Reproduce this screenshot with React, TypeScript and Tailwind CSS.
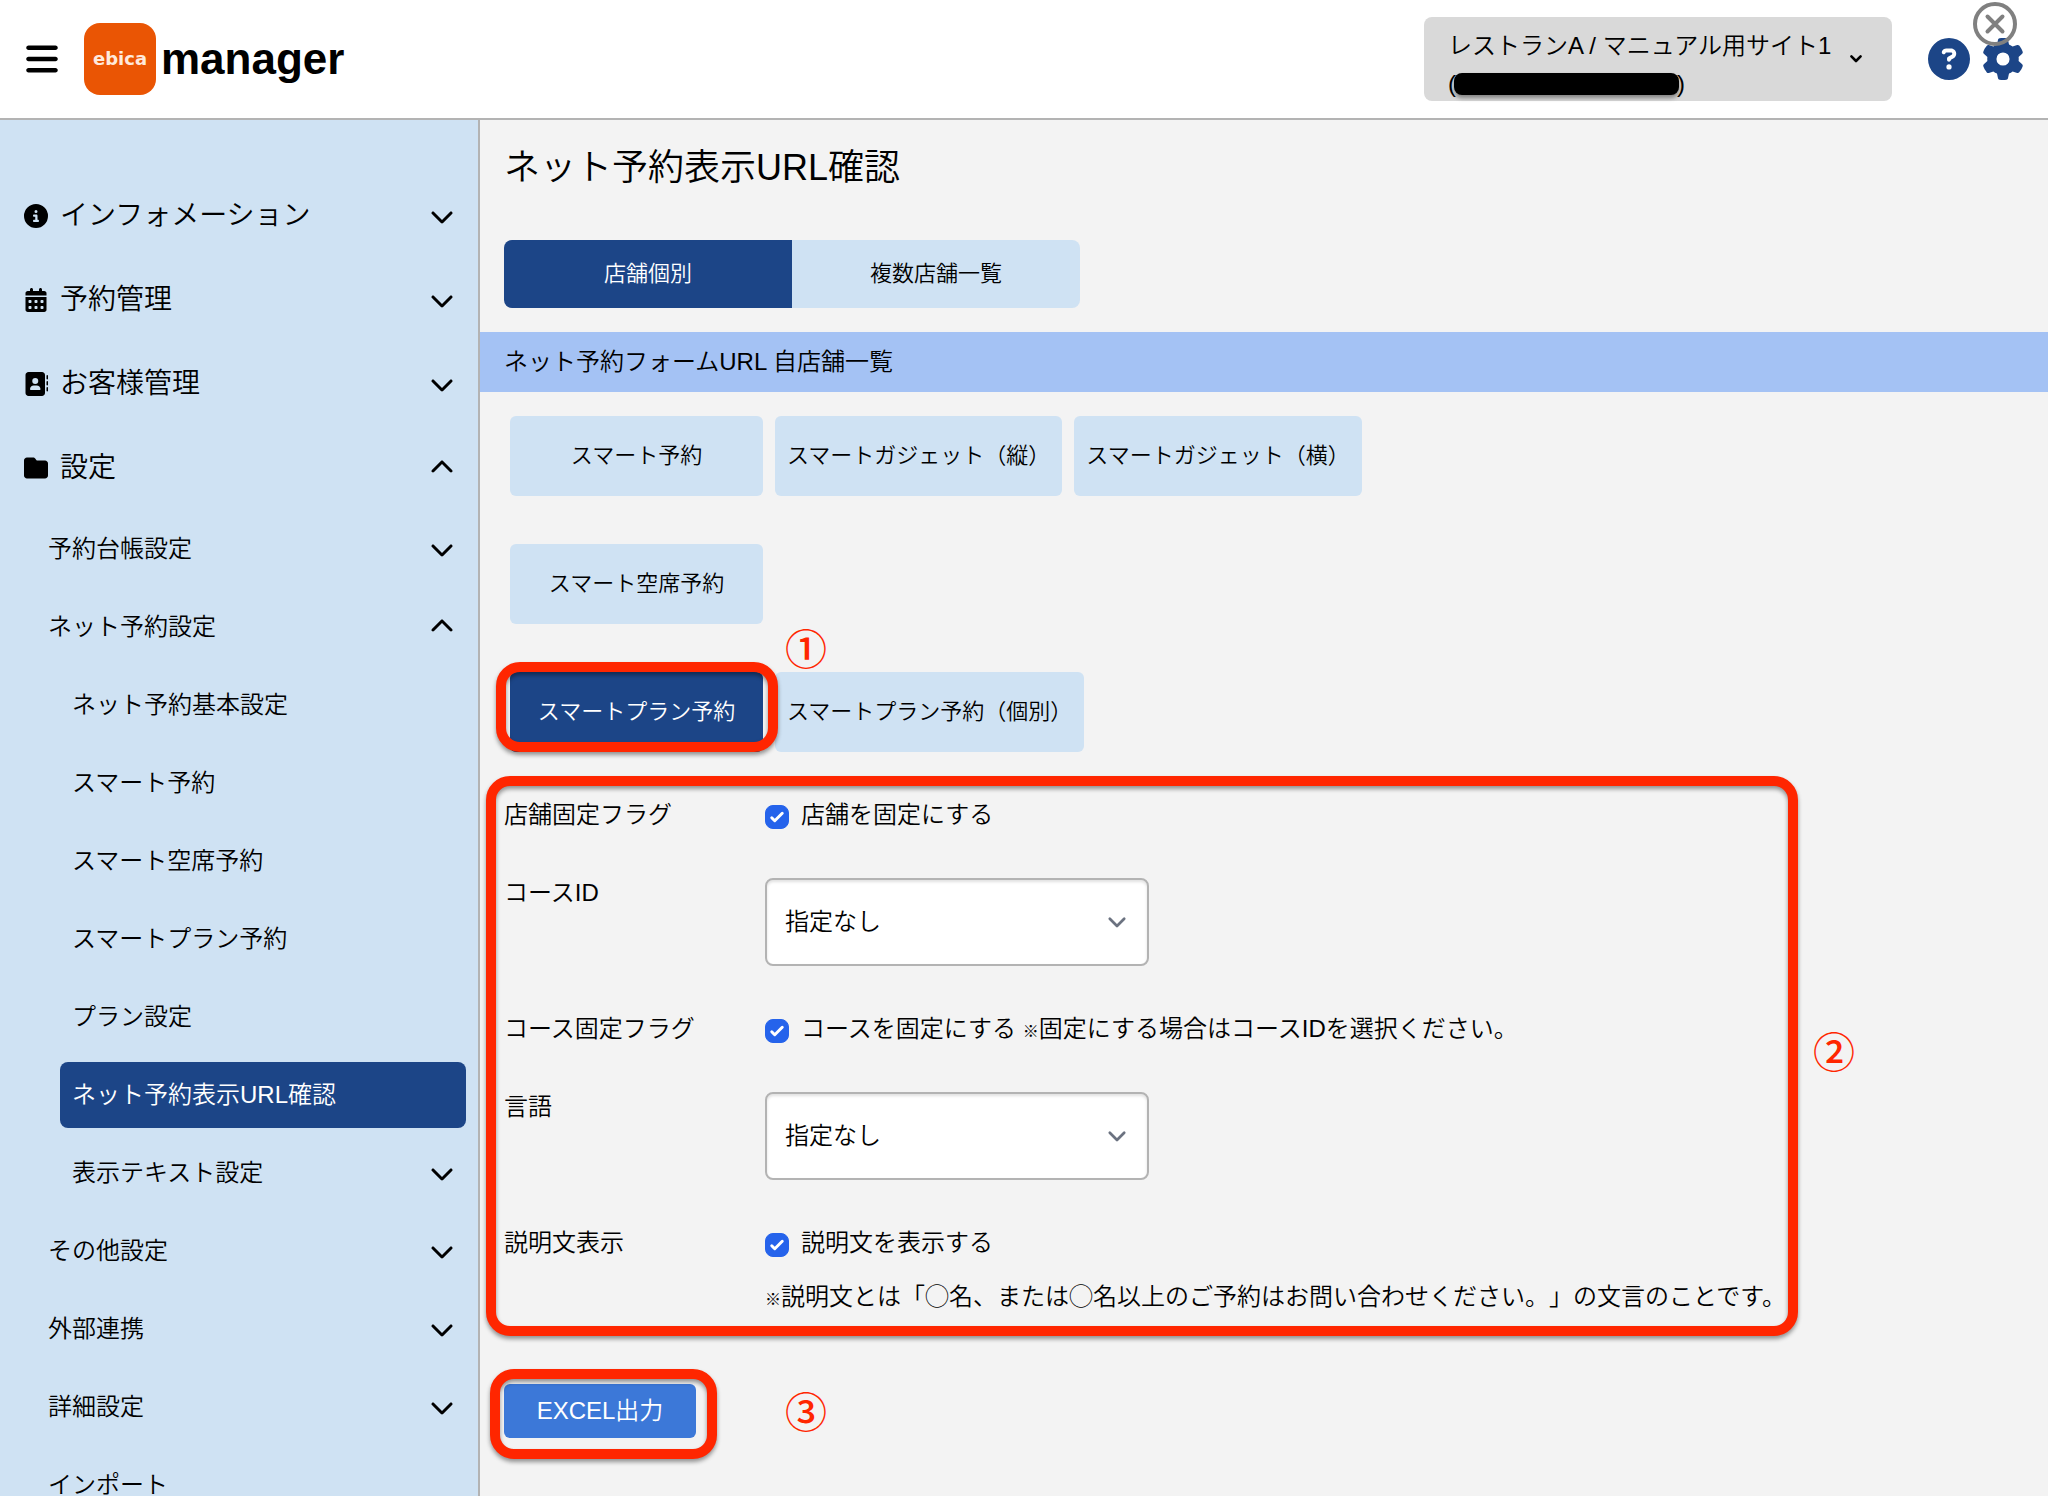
import { useState, type ReactNode } from "react";
import {
  FaAddressBook,
  FaBars,
  FaCalendarDays,
  FaChevronDown,
  FaChevronUp,
  FaCircleInfo,
  FaCircleQuestion,
  FaFolder,
  FaGear,
} from "react-icons/fa6";

type MenuItem = {
  label: string;
  level: 1 | 2 | 3;
  icon?: ReactNode;
  arrow?: "up" | "down";
  active?: boolean;
};

const menu: MenuItem[] = [
  { label: "インフォメーション", level: 1, icon: <FaCircleInfo />, arrow: "down" },
  { label: "予約管理", level: 1, icon: <FaCalendarDays />, arrow: "down" },
  { label: "お客様管理", level: 1, icon: <FaAddressBook />, arrow: "down" },
  { label: "設定", level: 1, icon: <FaFolder />, arrow: "up" },
  { label: "予約台帳設定", level: 2, arrow: "down" },
  { label: "ネット予約設定", level: 2, arrow: "up" },
  { label: "ネット予約基本設定", level: 3 },
  { label: "スマート予約", level: 3 },
  { label: "スマート空席予約", level: 3 },
  { label: "スマートプラン予約", level: 3 },
  { label: "プラン設定", level: 3 },
  { label: "ネット予約表示URL確認", level: 3, active: true },
  { label: "表示テキスト設定", level: 3, arrow: "down" },
  { label: "その他設定", level: 2, arrow: "down" },
  { label: "外部連携", level: 2, arrow: "down" },
  { label: "詳細設定", level: 2, arrow: "down" },
  { label: "インポート", level: 2 },
];

const rowStyle = {
  1: "h-[84px] pl-6 text-[28px]",
  2: "h-[78px] pl-12 text-2xl leading-6",
  3: "h-[78px] pl-[72px] text-2xl leading-6",
};

const formTypes = [
  ["スマート予約", "スマートガジェット（縦）", "スマートガジェット（横）"],
  ["スマート空席予約"],
  ["スマートプラン予約", "スマートプラン予約（個別）"],
];

function SidebarItem({ item }: { item: MenuItem }) {
  if (item.active) {
    return (
      <li className="py-[6px] pl-[60px] pr-3">
        <a
          href="#"
          aria-current="page"
          className="flex h-[66px] items-center rounded-lg bg-[#1c4587] pl-3 text-2xl leading-6 text-white"
        >
          {item.label}
        </a>
      </li>
    );
  }
  return (
    <li>
      <a href="#" className={`flex items-center pr-6 ${rowStyle[item.level]}`}>
        {item.icon && <span className="mr-3 text-2xl">{item.icon}</span>}
        <span className="flex-1">{item.label}</span>
        {item.arrow === "down" && <FaChevronDown className="size-6" />}
        {item.arrow === "up" && <FaChevronUp className="size-6" />}
      </a>
    </li>
  );
}

// Red frame laid over a step of the manual
function Frame({ className }: { className: string }) {
  return (
    <span
      className={`pointer-events-none absolute rounded-3xl border-10 border-[#ff2600] drop-shadow-[0_3px_2px_rgba(0,0,0,0.4)] ${className}`}
    />
  );
}

function StepNumber({ children, className }: { children: string; className: string }) {
  return (
    <span
      className={`pointer-events-none absolute text-[42px] leading-[42px] font-medium text-[#ff2600] ${className}`}
    >
      {children}
    </span>
  );
}

function Check({ id, children }: { id: string; children: ReactNode }) {
  const [checked, setChecked] = useState(true);
  return (
    <div className="flex h-[30px] items-center gap-3">
      <span className="relative mt-1 size-6 shrink-0">
        <input
          id={id}
          type="checkbox"
          checked={checked}
          onChange={(e) => setChecked(e.target.checked)}
          className="block size-6 appearance-none rounded-lg border border-gray-400 bg-white checked:border-[#2563eb] checked:bg-[#2563eb]"
        />
        {checked && (
          <svg viewBox="0 0 16 16" className="pointer-events-none absolute inset-0 size-6" fill="#fff">
            <path d="M12.207 4.793a1 1 0 0 1 0 1.414l-5 5a1 1 0 0 1-1.414 0l-2-2a1 1 0 0 1 1.414-1.414L6.5 9.086l4.293-4.293a1 1 0 0 1 1.414 0z" />
          </svg>
        )}
      </span>
      <label htmlFor={id}>{children}</label>
    </div>
  );
}

function Select({ id }: { id: string }) {
  return (
    <div className="relative w-96">
      <select
        id={id}
        className="block h-[88px] w-full appearance-none rounded-lg border-2 border-[#b3b3b3] bg-white pl-[18px] pr-12 shadow-[inset_0_2px_3px_rgba(0,0,0,0.12)]"
      >
        <option>指定なし</option>
      </select>
      <svg
        viewBox="0 0 20 20"
        className="pointer-events-none absolute top-[28px] right-4 size-8"
        fill="none"
        stroke="#6b7280"
        strokeWidth="1.7"
        strokeLinecap="round"
        strokeLinejoin="round"
      >
        <path d="M5.5 8l4.5 4.5L14.5 8" />
      </svg>
    </div>
  );
}

export default function App() {
  const [formType, setFormType] = useState("スマートプラン予約");

  return (
    <div className="flex h-screen flex-col overflow-hidden bg-[#f3f3f3] font-['Liberation_Sans','Noto_Sans_CJK_JP',sans-serif] text-2xl leading-[30px] font-[350] text-black [text-spacing-trim:space-all]">
      <header className="flex h-[120px] shrink-0 items-center border-b-2 border-[#b3b3b3] bg-white pl-6 pr-6">
        <button aria-label="メニュー" className="mr-6">
          <FaBars className="size-9" />
        </button>
        <div className="flex size-[72px] items-center justify-center rounded-2xl bg-[#ea5504] font-['DejaVu_Sans'] text-lg font-bold text-[#ffe9dc]">
          ebica
        </div>
        <h1 className="ml-[5px] text-[44px] leading-[54px] font-bold">manager</h1>

        <button
          aria-haspopup="listbox"
          className="ml-auto flex h-[84px] w-[468px] items-center justify-between rounded-lg bg-[#d9d9d9] pl-6 pr-7 text-left leading-[38px]"
        >
          <span className="pt-3">
            レストランA / マニュアル用サイト1
            <span className="flex items-center">
              (<span className="-mx-0.5 h-[22px] w-[225px] rounded-lg bg-black shadow-[0_3px_4px_rgba(0,0,0,0.4)]" />)
            </span>
          </span>
          <svg viewBox="0 0 16 10" className="h-[10px] w-4" fill="none" stroke="#000" strokeWidth="2.6" strokeLinecap="round" strokeLinejoin="round">
            <path d="M3.4 2.4l4.6 4.6 4.6-4.6" />
          </svg>
        </button>
        <button aria-label="ヘルプ" className="ml-9 text-[#1c4587]">
          <FaCircleQuestion className="size-[42px]" />
        </button>
        <div className="relative ml-3">
          <button aria-label="設定" className="block text-[#1c4587]">
            <FaGear className="size-[42px]" />
          </button>
          <button aria-label="閉じる" className="absolute -top-9 -left-[9px]">
            <svg viewBox="0 0 44 44" className="size-11" fill="none" stroke="#808080" strokeWidth="4" strokeLinecap="round">
              <circle cx="22" cy="22" r="20" />
              <path d="M14.5 14.5l15 15M29.5 14.5l-15 15" />
            </svg>
          </button>
        </div>
      </header>

      <div className="flex min-h-0 flex-1">
        <nav className="w-[480px] shrink-0 overflow-hidden border-r-2 border-[#b3b3b3] bg-[#cfe2f3] pt-[54px]">
          <ul>
            {menu.map((item) => (
              <SidebarItem key={item.label} item={item} />
            ))}
          </ul>
        </nav>

        <main className="min-w-0 flex-1 overflow-hidden pt-6">
          <h2 className="pl-6 text-4xl leading-[48px]">ネット予約表示URL確認</h2>

          <div className="mt-12 ml-6 flex h-[68px] w-[576px] overflow-hidden rounded-lg text-[22px]">
            <button className="flex-1 bg-[#1c4587] text-white">店舗個別</button>
            <button className="flex-1 bg-[#cfe2f3]">複数店舗一覧</button>
          </div>

          <h3 className="mt-6 bg-[#a4c2f4] pl-6 leading-[60px]">ネット予約フォームURL 自店舗一覧</h3>

          <div className="mt-6 ml-[30px] flex flex-col gap-12 text-[22px]">
            {formTypes.map((row) => (
              <div key={row[0]} className="flex gap-3">
                {row.map((name) => (
                  <div key={name} className="relative">
                    <button
                      onClick={() => setFormType(name)}
                      className={`h-20 min-w-[253px] rounded-md px-3 ${
                        name === formType ? "bg-[#1c4587] text-white" : "bg-[#cfe2f3]"
                      }`}
                    >
                      {name}
                    </button>
                    {name === "スマートプラン予約" && (
                      <>
                        <Frame className="-top-[10px] -left-[14px] z-10 h-[90px] w-[282px]" />
                        <StepNumber className="-top-[42px] left-[275px]">①</StepNumber>
                      </>
                    )}
                  </div>
                ))}
              </div>
            ))}
          </div>

          <form className="relative mt-12 ml-6 grid w-fit grid-cols-[261px_auto] gap-y-12 pr-3">
            <span>店舗固定フラグ</span>
            <Check id="fix-shop">店舗を固定にする</Check>

            <label htmlFor="course">コースID</label>
            <Select id="course" />

            <span>コース固定フラグ</span>
            <Check id="fix-course">
              コースを固定にする <span className="text-base">※</span>固定にする場合はコースIDを選択ください。
            </Check>

            <label htmlFor="lang">言語</label>
            <Select id="lang" />

            <span>説明文表示</span>
            <div>
              <Check id="show-text">説明文を表示する</Check>
              <p className="mt-6 whitespace-nowrap">
                <span className="text-base">※</span>
                説明文とは「◯名、または◯名以上のご予約はお問い合わせください。」の文言のことです。
              </p>
            </div>
            <Frame className="-top-6 right-0 -bottom-6 -left-[18px]" />
            <StepNumber className="top-[233px] -right-[57px]">②</StepNumber>
          </form>

          <div className="relative mt-[72px] ml-6 w-fit">
            <button className="block h-[54px] w-48 rounded-md bg-[#3c78d8] text-white">EXCEL出力</button>
            <Frame className="-top-[15px] -left-[14px] h-[90px] w-[227px]" />
            <StepNumber className="top-[9px] left-[281px]">③</StepNumber>
          </div>
        </main>
      </div>
    </div>
  );
}
